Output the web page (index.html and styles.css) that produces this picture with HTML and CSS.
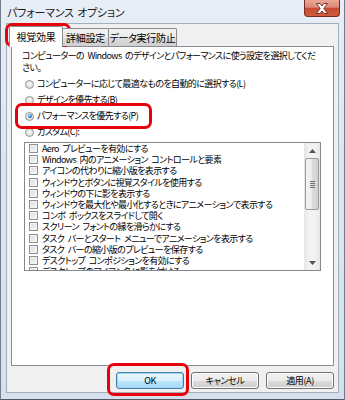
FILE: index.html
```html
<!DOCTYPE html>
<html lang="ja">
<head>
<meta charset="utf-8">
<title>パフォーマンス オプション</title>
<link rel="stylesheet" href="styles.css">
</head>
<body>
<div class="window">
  <div class="titlebar">
    <span class="title">パフォーマンス オプション</span>
    <div class="close">
      <svg width="14" height="11" viewBox="0 0 14 11">
        <path d="M1.5 0.5 H5 L7 3 L9 0.5 H12.5 L8.8 5.5 L12.5 10.5 H9 L7 8 L5 10.5 H1.5 L5.2 5.5 Z" fill="#fff" stroke="#6d2a20" stroke-width="0.9" stroke-linejoin="round"/>
      </svg>
    </div>
  </div>
  <div class="client">
    <div class="tabs">
      <div class="tab selected">視覚効果</div>
      <div class="tab t2">詳細設定</div>
      <div class="tab t3">データ実行防止</div>
    </div>
    <div class="panel">
      <p class="desc"><span class="line">コンピューターの Windows のデザインとパフォーマンスに使う設定を選択してくだ</span><span class="line">さい。</span></p>
      <div class="radios">
        <div class="radio"><span class="rb"></span>コンピューターに応じて最適なものを自動的に選択する(L)</div>
        <div class="radio"><span class="rb"></span>デザインを優先する(B)</div>
        <div class="radio"><span class="rb on"></span>パフォーマンスを優先する(P)</div>
        <div class="radio"><span class="rb"></span>カスタム(C):</div>
      </div>
      <div class="listbox">
        <div class="items">
          <div class="item"><span class="cb"></span>Aero プレビューを有効にする</div>
          <div class="item"><span class="cb"></span>Windows 内のアニメーション コントロールと要素</div>
          <div class="item"><span class="cb"></span>アイコンの代わりに縮小版を表示する</div>
          <div class="item"><span class="cb"></span>ウィンドウとボタンに視覚スタイルを使用する</div>
          <div class="item"><span class="cb"></span>ウィンドウの下に影を表示する</div>
          <div class="item"><span class="cb"></span>ウィンドウを最大化や最小化するときにアニメーションで表示する</div>
          <div class="item"><span class="cb"></span>コンボ ボックスをスライドして開く</div>
          <div class="item"><span class="cb"></span>スクリーン フォントの縁を滑らかにする</div>
          <div class="item"><span class="cb"></span>タスク バーとスタート メニューでアニメーションを表示する</div>
          <div class="item"><span class="cb"></span>タスク バーの縮小版のプレビューを保存する</div>
          <div class="item"><span class="cb"></span>デスクトップ コンポジションを有効にする</div>
          <div class="item"><span class="cb"></span>デスクトップのアイコン名に影を付ける</div>
        </div>
        <div class="scrollbar">
          <div class="arrow"><svg width="7" height="4" viewBox="0 0 7 4"><path d="M0 4 L3.5 0 L7 4 Z" fill="#555"/></svg></div>
          <div class="thumb"><span class="grip"></span><span class="grip"></span><span class="grip"></span><span class="grip"></span></div>
          <div class="track"></div>
          <div class="arrow"><svg width="7" height="4" viewBox="0 0 7 4"><path d="M0 0 L7 0 L3.5 4 Z" fill="#555"/></svg></div>
        </div>
      </div>
    </div>
    <div class="buttons">
      <button class="btn default">OK</button>
      <button class="btn">キャンセル</button>
      <button class="btn">適用(A)</button>
    </div>
  </div>
</div>
<div class="mark mark-tab"></div>
<div class="mark mark-radio"></div>
<div class="mark mark-ok"></div>
</body>
</html>
```

FILE: styles.css
```css
* { box-sizing: border-box; }
html, body { margin: 0; padding: 0; }
body {
  width: 345px;
  height: 400px;
  overflow: hidden;
  background: #ffffff;
  font-family: "Noto Sans CJK JP", "Noto Sans", sans-serif;
  font-feature-settings: "palt";
  color: #000;
  position: relative;
}
.window {
  width: 345px;
  height: 400px;
  border-left: 1px solid #6f7c8a;
  border-right: 1px solid #6f7c8a;
  border-bottom: 1px solid #4e5a66;
  padding: 0 5px 6px 5px;
  background: linear-gradient(180deg, #e8eef6 0%, #dde6f0 40%, #d6e0ec 100%);
  display: flex;
  flex-direction: column;
}
.titlebar {
  height: 23px;
  display: flex;
  align-items: flex-start;
}
.title {
  margin-top: 5px;
  margin-left: 1px;
  font-size: 11px;
  line-height: 14px;
  letter-spacing: -0.2px;
  word-spacing: 1px;
  color: #1c1c1c;
  white-space: nowrap;
}
.close {
  margin-left: auto;
  margin-right: -1px;
  width: 36px;
  height: 17px;
  border: 1px solid #7a2c22;
  border-top: none;
  border-radius: 0 0 4px 4px;
  background: linear-gradient(180deg, #e9a797 0%, #dc8a78 45%, #c84a33 52%, #cf5b3f 100%);
  display: flex;
  align-items: center;
  justify-content: center;
}
.close svg { display: block; }
.client {
  flex: 1;
  background: #f0f0f0;
  border: 1px solid #a3aebb;
  padding: 2px 4px 3px 4px;
  display: flex;
  flex-direction: column;
}
.tabs {
  height: 20px;
  display: flex;
  align-items: flex-end;
  font-size: 10px;
  line-height: 12px;
  letter-spacing: -0.3px;
  position: relative;
  z-index: 2;
}
.tab {
  height: 18px;
  border: 1px solid #898c95;
  border-bottom: none;
  border-radius: 2px 2px 0 0;
  background: linear-gradient(180deg, #f3f3f3 0%, #ebebeb 50%, #dddddd 51%, #cfcfcf 100%);
  display: flex;
  align-items: center;
  justify-content: center;
  white-space: nowrap;
}
.tab.selected {
  height: 21px;
  width: 54px;
  margin-left: -2px;
  margin-bottom: -1px;
  background: #ffffff;
  position: relative;
  z-index: 3;
}
.tab.t2 { width: 47px; margin-left: -1px; }
.tab.t3 { width: 69px; margin-left: -1px; }
.panel {
  height: 320px;
  background: #ffffff;
  border: 1px solid #898c95;
  padding: 3px 10px 0 10px;
  font-size: 9px;
  letter-spacing: -0.6px;
  word-spacing: 2px;
}
.desc {
  margin: 0;
  line-height: 12px;
}
.desc .line { display: block; white-space: nowrap; }
.radios {
  margin-top: 2px;
  padding-left: 3px;
}
.radio {
  height: 16px;
  display: flex;
  align-items: center;
  white-space: nowrap;
  line-height: 12px;
}
.rb {
  width: 9px;
  height: 9px;
  border-radius: 50%;
  border: 1px solid #939393;
  background: radial-gradient(circle at 50% 40%, #f6f6f6 0%, #e2e2e2 60%, #cfcfcf 100%);
  margin-right: 3px;
  flex: none;
  position: relative;
}
.rb.on::after {
  content: "";
  position: absolute;
  left: 1.5px;
  top: 1.5px;
  width: 4px;
  height: 4px;
  border-radius: 50%;
  background: radial-gradient(circle at 40% 35%, #9fd6ff 0%, #2b7ad0 60%, #174c8f 100%);
}
.listbox {
  margin-top: 2px;
  margin-left: 2px;
  width: 297px;
  height: 129px;
  border: 1px solid #828790;
  display: flex;
  overflow: hidden;
}
.items {
  flex: 1;
  overflow: hidden;
  padding-left: 4px;
  letter-spacing: -0.6px;
  word-spacing: 2px;
}
.item {
  height: 11.2px;
  display: flex;
  align-items: center;
  white-space: nowrap;
  line-height: 11px;
}
.cb {
  width: 9px;
  height: 9px;
  border: 1px solid #8f8f8f;
  background: linear-gradient(135deg, #d9d9d9 0%, #ececec 60%, #f8f8f8 100%);
  box-shadow: inset 0 0 0 1px #f4f4f4;
  margin-right: 4px;
  flex: none;
}
.scrollbar {
  width: 16px;
  flex: none;
  display: flex;
  flex-direction: column;
  background: linear-gradient(90deg, #e6e6e6 0%, #f2f2f2 30%, #f2f2f2 70%, #e6e6e6 100%);
}
.arrow {
  height: 15px;
  display: flex;
  align-items: center;
  justify-content: center;
  flex: none;
}
.arrow svg { display: block; }
.thumb {
  height: 52px;
  margin: 0 1px;
  border: 1px solid #9a9a9a;
  border-radius: 2px;
  background: linear-gradient(90deg, #f4f4f4 0%, #ececec 50%, #dcdcdc 51%, #d2d2d2 100%);
  display: flex;
  flex-direction: column;
  align-items: center;
  justify-content: center;
  gap: 1px;
  flex: none;
}
.grip {
  width: 5px;
  height: 1px;
  background: #6f6f6f;
}
.track { flex: 1; }
.buttons {
  margin-top: 6px;
  height: 17px;
  display: flex;
  justify-content: flex-end;
  gap: 7px;
}
.btn {
  width: 68px;
  height: 17px;
  padding: 0;
  border: 1px solid #707070;
  border-radius: 3px;
  background: linear-gradient(180deg, #f2f2f2 0%, #ebebeb 50%, #dddddd 51%, #cfcfcf 100%);
  box-shadow: inset 0 0 0 1px #fcfcfc;
  font-family: "Noto Sans CJK JP", "Noto Sans", sans-serif;
  font-feature-settings: "palt";
  font-size: 9px;
  letter-spacing: -0.4px;
  line-height: 12px;
  color: #000;
}
.btn.default {
  border-color: #3c7fb1;
  background: linear-gradient(180deg, #eaf6fd 0%, #d9f0fc 50%, #bee6fd 51%, #a7d9f5 100%);
  box-shadow: inset 0 0 0 1px #a4d6f2;
}
.mark {
  position: absolute;
  border: 3px solid #e8000d;
  border-radius: 7px;
}
.mark-tab { left: 5px; top: 23px; width: 66px; height: 24px; }
.mark-radio { left: 15px; top: 103px; width: 137px; height: 26px; }
.mark-ok { left: 107px; top: 363px; width: 82px; height: 33px; }
```
